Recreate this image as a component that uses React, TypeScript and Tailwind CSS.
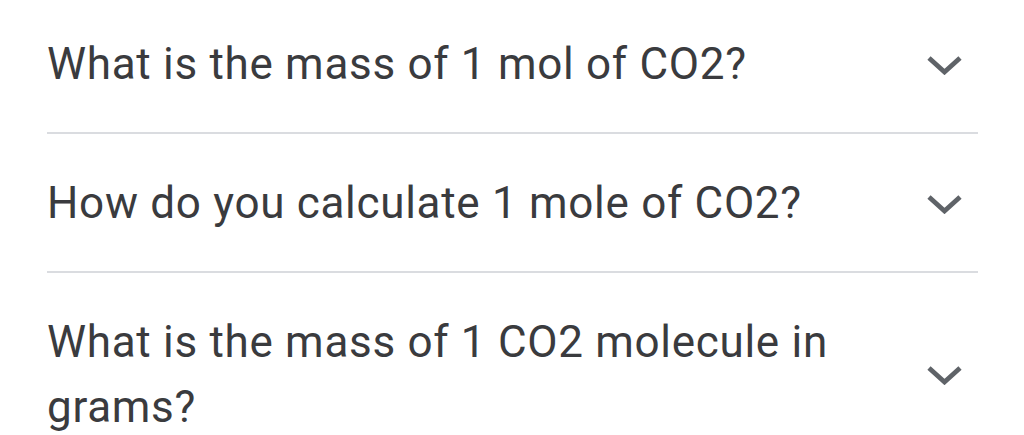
const questions = [
  "What is the mass of 1 mol of CO2?",
  "How do you calculate 1 mole of CO2?",
  "What is the mass of 1 CO2 molecule in grams?",
];

function Chevron() {
  return (
    <svg width="35" height="20" viewBox="0 0 35 20" className="mr-[16px] shrink-0" aria-hidden>
      <polyline
        points="2,3 17.5,17 33,3"
        fill="none"
        stroke="#5f6368"
        strokeWidth="4.8"
        strokeLinecap="butt"
        strokeLinejoin="miter"
      />
    </svg>
  );
}

export default function App() {
  return (
    <div
      className="h-[435px] w-[1024px] overflow-hidden bg-white"
      style={{ fontFamily: "Roboto, 'Noto Sans', Arial, sans-serif" }}
    >
      <div className="ml-[47px] w-[931px]">
        {questions.map((q, i) => (
          <div key={q}>
            {i > 0 && <div className="h-[2px] bg-[#dadce0]" />}
            <div
              className={
                "flex items-center pb-[35px] " + (i === 0 ? "pt-[32px]" : "pt-[37px]")
              }
            >
              <div className="flex-1 pr-[24px] text-[44px] leading-[65px] tracking-[0.7px] text-[#3a3b3e]">
                {q}
              </div>
              <Chevron />
            </div>
          </div>
        ))}
      </div>
    </div>
  );
}
